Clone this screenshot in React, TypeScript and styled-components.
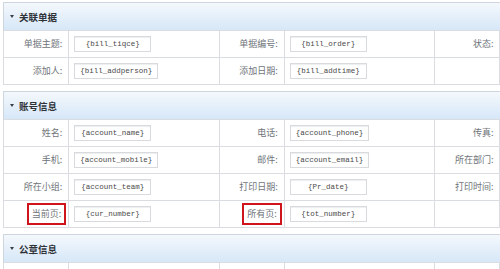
import styled, { createGlobalStyle } from "styled-components";

const GlobalStyle = createGlobalStyle`
  html, body {
    margin: 0;
    padding: 0;
    background: #fff;
    overflow: hidden;
  }
  body {
    font-family: "Noto Sans CJK SC", "Liberation Sans", sans-serif;
  }
`;

const StyledPage = styled.div`
  width: 660px;
  padding: 2px 0 0 3px;
  display: flex;
  flex-direction: column;
  gap: 6px;
`;

const StyledPanel = styled.section`
  width: 648px;
`;

const StyledHeader = styled.div`
  height: 27px;
  display: flex;
  align-items: center;
  gap: 5px;
  padding-left: 6px;
  border: 1px solid #cdd5de;
  border-bottom: none;
  background: linear-gradient(to bottom, #f4f8fc, #d6e7f8);
  font-size: 9.5px;
  font-weight: bold;
  color: #2f3338;
`;

const StyledArrow = styled.span`
  width: 0;
  height: 0;
  border-left: 2.5px solid transparent;
  border-right: 2.5px solid transparent;
  border-top: 3px solid #3a3f45;
`;

const StyledTable = styled.table`
  width: 100%;
  border-collapse: collapse;
  table-layout: fixed;
`;

const StyledCol = styled.col<{ $label?: boolean }>`
  width: ${(p) => (p.$label ? "65px" : "150px")};
`;

const StyledCell = styled.td<{ $label?: boolean }>`
  height: 26px;
  padding: 0 ${(p) => (p.$label ? "6px" : "5px")};
  border: 1px solid #d9dde2;
  text-align: ${(p) => (p.$label ? "right" : "left")};
  font-size: 9px;
  color: #6f747a;
  white-space: nowrap;
  overflow: hidden;
`;

const StyledLabel = styled.span<{ $marked?: boolean }>`
  display: inline-block;
  line-height: 18px;
  padding: 0 ${(p) => (p.$marked ? "3px" : "0")};
  border: ${(p) => (p.$marked ? "2px solid #d0141b" : "none")};
  margin-right: ${(p) => (p.$marked ? "-4px" : "0")};
`;

const StyledInput = styled.span`
  display: inline-block;
  min-width: 65px;
  height: 14px;
  line-height: 14px;
  padding: 0 5px;
  border: 1px solid #d8dadd;
  box-shadow: inset 0 1px 1px #eceef0;
  background: #fff;
  text-align: center;
  vertical-align: middle;
  font-family: "Liberation Mono", monospace;
  font-size: 7.5px;
  color: #4a4a4a;
`;

type Field = { label?: string; value?: string; marked?: boolean };

const Panel = ({ title, rows }: { title: string; rows: Field[][] }) => (
  <StyledPanel>
    <StyledHeader>
      <StyledArrow />
      {title}
    </StyledHeader>
    <StyledTable>
      <colgroup>
        <StyledCol $label />
        <StyledCol />
        <StyledCol $label />
        <StyledCol />
        <StyledCol $label />
        <StyledCol />
      </colgroup>
      <tbody>
        {rows.map((row, i) => (
          <tr key={i}>
            {row.map((field, j) => [
              <StyledCell $label key={`l${j}`}>
                {field.label && (
                  <StyledLabel $marked={field.marked}>{field.label}:</StyledLabel>
                )}
              </StyledCell>,
              <StyledCell key={`v${j}`}>
                {field.value && <StyledInput>{field.value}</StyledInput>}
              </StyledCell>,
            ])}
          </tr>
        ))}
      </tbody>
    </StyledTable>
  </StyledPanel>
);

const billRows: Field[][] = [
  [
    { label: "单据主题", value: "{bill_tiqce}" },
    { label: "单据编号", value: "{bill_order}" },
    { label: "状态" },
  ],
  [
    { label: "添加人", value: "{bill_addperson}" },
    { label: "添加日期", value: "{bill_addtime}" },
    {},
  ],
];

const accountRows: Field[][] = [
  [
    { label: "姓名", value: "{account_name}" },
    { label: "电话", value: "{account_phone}" },
    { label: "传真" },
  ],
  [
    { label: "手机", value: "{account_mobile}" },
    { label: "邮件", value: "{account_email}" },
    { label: "所在部门" },
  ],
  [
    { label: "所在小组", value: "{account_team}" },
    { label: "打印日期", value: "{Pr_date}" },
    { label: "打印时间" },
  ],
  [
    { label: "当前页", value: "{cur_number}", marked: true },
    { label: "所有页", value: "{tot_number}", marked: true },
    {},
  ],
];

const sealRows: Field[][] = [[{}, {}, {}]];

const App = () => (
  <>
    <GlobalStyle />
    <StyledPage>
      <Panel title="关联单据" rows={billRows} />
      <Panel title="账号信息" rows={accountRows} />
      <Panel title="公章信息" rows={sealRows} />
    </StyledPage>
  </>
);

export default App;
